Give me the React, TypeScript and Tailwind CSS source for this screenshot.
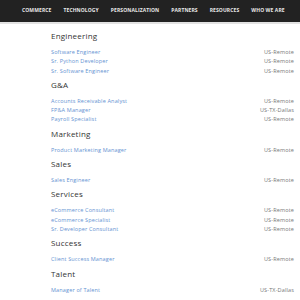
import React from "react";

const nav = ["COMMERCE", "TECHNOLOGY", "PERSONALIZATION", "PARTNERS", "RESOURCES", "WHO WE ARE"];

const sections: { title: string; jobs: [string, string][] }[] = [
  { title: "Engineering", jobs: [["Software Engineer", "US-Remote"], ["Sr. Python Developer", "US-Remote"], ["Sr. Software Engineer", "US-Remote"]] },
  { title: "G&A", jobs: [["Accounts Receivable Analyst", "US-Remote"], ["FP&A Manager", "US-TX-Dallas"], ["Payroll Specialist", "US-Remote"]] },
  { title: "Marketing", jobs: [["Product Marketing Manager", "US-Remote"]] },
  { title: "Sales", jobs: [["Sales Engineer", "US-Remote"]] },
  { title: "Services", jobs: [["eCommerce Consultant", "US-Remote"], ["eCommerce Specialist", "US-Remote"], ["Sr. Developer Consultant", "US-Remote"]] },
  { title: "Success", jobs: [["Client Success Manager", "US-Remote"]] },
  { title: "Talent", jobs: [["Manager of Talent", "US-TX-Dallas"]] },
];

export default function App() {
  return (
    <div className="w-[300px] h-[300px] overflow-hidden bg-white" style={{ fontFamily: '"Open Sans", sans-serif' }}>
      <div className="h-[22px] bg-[#222222] border-b-[2px] border-[#e2e2e2] box-content flex items-center pl-[22px] pr-[6px] gap-[12px]">
        {nav.map((n) => (
          <span key={n} className="text-[5px] font-bold text-[#e8e8e8] whitespace-nowrap tracking-[0.1px]">{n}</span>
        ))}
      </div>
      <div className="pl-[51px] pr-[6px] pt-[3px]">
        {sections.map((s) => (
          <div key={s.title}>
            <div className="pt-[4px] pb-[7px] h-[21px] leading-[10px] text-[8px] text-[#333333] tracking-[0.2px]">{s.title}</div>
            {s.jobs.map(([j, l]) => (
              <div key={j} className="h-[9.3px] flex items-center justify-between text-[5.5px] leading-[9.3px]">
                <span className="text-[#6693d2] tracking-[0.15px]">{j}</span>
                <span className="text-[#777777] tracking-[0.15px]">{l}</span>
              </div>
            ))}
          </div>
        ))}
      </div>
    </div>
  );
}
